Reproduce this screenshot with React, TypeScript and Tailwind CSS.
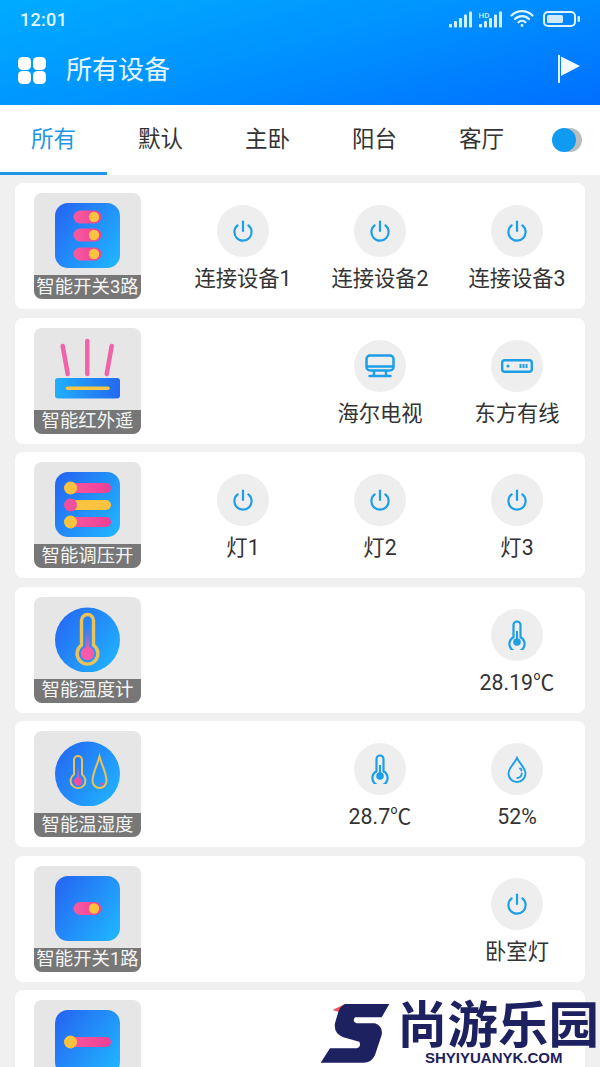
import React from "react";

const FONT = { fontFamily: 'Roboto, "Noto Sans CJK SC", sans-serif' };

function Defs({ id }: { id: string }) {
  return (
    <defs>
      <linearGradient id={`${id}-b`} x1="0" y1="0.1" x2="1" y2="0.8">
        <stop offset="0" stopColor="#2566f2" />
        <stop offset="1" stopColor="#20b2ff" />
      </linearGradient>
      <linearGradient id={`${id}-p`} x1="0" y1="0" x2="1" y2="0">
        <stop offset="0" stopColor="#f95aa0" />
        <stop offset="1" stopColor="#ee3f95" />
      </linearGradient>
      <linearGradient id={`${id}-t`} x1="0" y1="0" x2="0" y2="1">
        <stop offset="0" stopColor="#f04fa0" stopOpacity="0.1" />
        <stop offset="1" stopColor="#f95aa8" />
      </linearGradient>
    </defs>
  );
}

function Sw3() {
  return (
    <svg width="65" height="65" viewBox="0 0 65 65">
      <Defs id="sw3" />
      <rect width="65" height="65" rx="13" fill="url(#sw3-b)" />
      {[14, 32, 51].map((y) => (
        <g key={y}>
          <rect x="18.5" y={y - 6.5} width="28" height="13" rx="6.5" fill="url(#sw3-p)" />
          <circle cx="39" cy={y} r="5.2" fill="#f9c23f" />
        </g>
      ))}
    </svg>
  );
}

function Sw1() {
  return (
    <svg width="65" height="65" viewBox="0 0 65 65">
      <Defs id="sw1" />
      <rect width="65" height="65" rx="13" fill="url(#sw1-b)" />
      <rect x="18.5" y="26" width="28" height="13" rx="6.5" fill="url(#sw1-p)" />
      <circle cx="39" cy="32.5" r="5.2" fill="#f9c23f" />
    </svg>
  );
}

function Ir() {
  return (
    <svg width="65" height="65" viewBox="0 0 65 65">
      <Defs id="ir" />
      <g stroke="#f063a8" strokeWidth="4.5" strokeLinecap="round">
        <path d="M7.7 8 12.7 36" />
        <path d="M32.3 3V36" />
        <path d="M56.7 8 51.7 36" />
      </g>
      <linearGradient id="ir-ir" x1="0" y1="0" x2="1" y2="0">
        <stop offset="0" stopColor="#20b0fb" />
        <stop offset="1" stopColor="#2468f0" />
      </linearGradient>
      <rect x="0" y="40" width="65" height="20.5" rx="3" fill="url(#ir-ir)" />
      <path d="M12.5 50.2H53" stroke="#f7c744" strokeWidth="3.4" strokeLinecap="round" />
    </svg>
  );
}

function Slider3() {
  const rows = [
    { y: 16, bar: "url(#sl3-p)", knob: "#f9c23f" },
    { y: 33, bar: "#f9c23f", knob: "#f2509d" },
    { y: 50, bar: "url(#sl3-p)", knob: "#f9c23f" },
  ];
  return (
    <svg width="65" height="65" viewBox="0 0 65 65">
      <Defs id="sl3" />
      <rect width="65" height="65" rx="13" fill="url(#sl3-b)" />
      {rows.map((r) => (
        <g key={r.y}>
          <rect x="10" y={r.y - 5} width="46" height="10" rx="5" fill={r.bar} />
          <circle cx="15.5" cy={r.y} r="6.5" fill={r.knob} />
        </g>
      ))}
    </svg>
  );
}

function Slider1() {
  return (
    <svg width="65" height="65" viewBox="0 0 65 65">
      <Defs id="sl1" />
      <rect width="65" height="65" rx="13" fill="url(#sl1-b)" />
      <rect x="10" y="27" width="46" height="10" rx="5" fill="url(#sl1-p)" />
      <circle cx="15.5" cy="32" r="6.5" fill="#f9c23f" />
    </svg>
  );
}

function ThermoTile() {
  return (
    <svg width="65" height="65" viewBox="0 0 65 65">
      <Defs id="tt" />
      <circle cx="32.5" cy="33" r="32.5" fill="url(#tt-b)" />
      <path
        d="M26.5 38.2V13.5a6 6 0 0 1 12 0v24.7a10.4 10.4 0 1 1-12 0Z"
        fill="none"
        stroke="#ecc156"
        strokeWidth="3.4"
      />
      <rect x="30.5" y="22" width="4" height="22" fill="url(#tt-t)" />
      <circle cx="32.5" cy="46.5" r="6.8" fill="#f65aa8" />
    </svg>
  );
}

function HumTile() {
  return (
    <svg width="65" height="65" viewBox="0 0 65 65">
      <Defs id="ht" />
      <circle cx="32.5" cy="33" r="32.5" fill="url(#ht-b)" />
      <path
        d="M19 33.5V19a4 4 0 0 1 8 0v14.5a7.4 7.4 0 1 1-8 0Z"
        fill="none"
        stroke="#ecc156"
        strokeWidth="2"
      />
      <rect x="22" y="26" width="2" height="12" fill="url(#ht-t)" />
      <circle cx="23" cy="40.5" r="4.2" fill="#f04fa0" />
      <path
        d="M44.5 15.5C47 25 51.5 32 51.5 40a7 7 0 0 1-14 0C37.5 32 42 25 44.5 15.5Z"
        fill="none"
        stroke="#ecc156"
        strokeWidth="2"
      />
      <circle cx="47" cy="43" r="1.6" fill="#f04fa0" />
    </svg>
  );
}

const BLUE = "#1d9fe8";

function Power() {
  return (
    <svg width="24" height="24" viewBox="0 0 24 24" fill="none" stroke={BLUE} strokeWidth="2.2" strokeLinecap="round">
      <path d="M12 2.5V12" />
      <path d="M6.6 6.4a8.6 8.6 0 1 0 10.8 0" />
    </svg>
  );
}

function Tv() {
  return (
    <svg width="30" height="24" viewBox="0 0 30 24" fill="none" stroke={BLUE} strokeWidth="2.5">
      <rect x="1.5" y="1.5" width="27" height="15" rx="3.5" />
      <path d="M1.5 12.5H28.5" />
      <path d="M9 17V21.5M21 17V21.5M4.5 22H25.5" strokeLinecap="round" />
    </svg>
  );
}

function BoxIcon() {
  return (
    <svg width="32" height="14" viewBox="0 0 32 14" fill="none">
      <rect x="1.2" y="1.2" width="29.6" height="11.6" rx="2.5" stroke={BLUE} strokeWidth="2.4" />
      <circle cx="7" cy="7" r="1.6" fill={BLUE} />
      <path d="M19.5 5V9M22.5 5V9M25.5 5V9" stroke={BLUE} strokeWidth="2" />
    </svg>
  );
}

function Thermo() {
  return (
    <svg width="18" height="30" viewBox="0 0 18 30" fill="none">
      <path
        d="M5.5 17.2V5a3.5 3.5 0 0 1 7 0v12.2a7.6 7.6 0 1 1-7 0Z"
        stroke={BLUE}
        strokeWidth="2.2"
      />
      <path d="M9 11V20" stroke={BLUE} strokeWidth="2" />
      <circle cx="9" cy="22" r="3.8" fill={BLUE} />
    </svg>
  );
}

function Drop() {
  return (
    <svg width="20" height="27" viewBox="0 0 20 27" fill="none" stroke={BLUE} strokeWidth="1.9">
      <path d="M10 1.8C12 7 18.5 11.5 18.5 17.5a8.5 8.5 0 0 1-17 0C1.5 11.5 8 7 10 1.8Z" />
      <path d="M13 12.5a2 2 0 0 1 1.5 2M14.8 17.5a5 5 0 0 1-4.5 4.5" strokeLinecap="round" />
    </svg>
  );
}

type Item = { icon: React.ReactNode; label: string } | null;

function Cell({ item }: { item: Item }) {
  if (!item) return <div className="w-[137px]" />;
  return (
    <div className="flex w-[137px] flex-col items-center pt-[22px]">
      <div className="flex h-[52px] w-[52px] items-center justify-center rounded-full bg-[#eeeeee]">{item.icon}</div>
      <div className="mt-[7px] whitespace-nowrap pl-[1px] text-[21.3px] leading-[30px] text-[#333333]">{item.label}</div>
    </div>
  );
}

const power = <Power />;

const cards: { icon: React.ReactNode; name?: string; items: Item[] }[] = [
  {
    icon: <Sw3 />,
    name: "智能开关3路",
    items: [
      { icon: power, label: "连接设备1" },
      { icon: power, label: "连接设备2" },
      { icon: power, label: "连接设备3" },
    ],
  },
  {
    icon: <Ir />,
    name: "智能红外遥",
    items: [null, { icon: <Tv />, label: "海尔电视" }, { icon: <BoxIcon />, label: "东方有线" }],
  },
  {
    icon: <Slider3 />,
    name: "智能调压开",
    items: [
      { icon: power, label: "灯1" },
      { icon: power, label: "灯2" },
      { icon: power, label: "灯3" },
    ],
  },
  {
    icon: <ThermoTile />,
    name: "智能温度计",
    items: [null, null, { icon: <Thermo />, label: "28.19℃" }],
  },
  {
    icon: <HumTile />,
    name: "智能温湿度",
    items: [null, { icon: <Thermo />, label: "28.7℃" }, { icon: <Drop />, label: "52%" }],
  },
  {
    icon: <Sw1 />,
    name: "智能开关1路",
    items: [null, null, { icon: power, label: "卧室灯" }],
  },
  {
    icon: <Slider1 />,
    items: [null, null, null],
  },
];

function Signal({ hd }: { hd?: boolean }) {
  return (
    <svg width="23" height="17" viewBox="0 0 23 17" fill="#cfeeff">
      {hd && (
        <text x="-0.5" y="6.5" fontSize="8" fontWeight="500" fontFamily="Roboto, sans-serif" fill="#cfeeff">
          HD
        </text>
      )}
      <rect x="0" y="13" width="3" height="3.5" rx="0.8" />
      <rect x="5" y="10" width="3" height="6.5" rx="0.8" />
      <rect x="10" y="7" width="3" height="9.5" rx="0.8" />
      <rect x="15" y="3.5" width="3" height="13" rx="0.8" />
      <rect x="20" y="0.5" width="3" height="16" rx="0.8" />
    </svg>
  );
}

function Wifi() {
  return (
    <svg width="24" height="20" viewBox="0 0 24 20" fill="none" stroke="#dff4ff" strokeWidth="2.2" strokeLinecap="round">
      <path d="M1.5 6.5a15 15 0 0 1 21 0" />
      <path d="M5 10a10 10 0 0 1 14 0" />
      <path d="M8.5 13.3a5 5 0 0 1 7 0" />
      <circle cx="12" cy="16.5" r="1.4" fill="#dff4ff" stroke="none" />
    </svg>
  );
}

function Battery() {
  return (
    <svg width="37" height="16" viewBox="0 0 37 16">
      <rect x="1" y="1" width="31" height="14" rx="4" fill="none" stroke="#dff4ff" strokeWidth="2" />
      <rect x="4" y="4" width="16" height="8" rx="1.5" fill="#cfe9ff" />
      <rect x="34.5" y="5" width="2.5" height="6" rx="1" fill="#cfe9ff" />
    </svg>
  );
}

export default function App() {
  return (
    <div className="relative h-[1067px] w-[600px] overflow-hidden bg-[#f0f0f0]" style={FONT}>
      <header className="h-[105px] bg-[linear-gradient(165deg,#00acff_0%,#0095ff_45%,#006fff_100%)] text-white">
        <div className="flex h-[38px] items-center justify-between pl-[20px] pr-[20px]">
          <span className="text-[18px] font-medium tracking-[0.3px] text-[#e6f6ff]">12:01</span>
          <div className="flex items-center">
            <Signal />
            <span className="ml-[7px] flex"><Signal hd /></span>
            <span className="ml-[8px] flex"><Wifi /></span>
            <span className="ml-[9px] flex"><Battery /></span>
          </div>
        </div>
        <div className="flex h-[62px] items-center pl-[18px] pr-[19px] pt-[2px]">
          <div className="grid w-[28px] grid-cols-2 gap-[1px]">
            <span className="h-[13px] w-[13px] rounded-[4.5px] bg-white" />
            <span className="h-[13px] w-[13px] rounded-[4.5px] bg-white" />
            <span className="h-[13px] w-[13px] rounded-[4.5px] bg-white" />
            <span className="h-[13px] w-[13px] rounded-[4.5px] bg-white" />
          </div>
          <span className="ml-[20px] text-[26px] leading-none text-[#e8f6ff]">所有设备</span>
          <svg className="ml-auto -translate-y-[1px]" width="24" height="28" viewBox="0 0 24 28">
            <rect x="1" y="0" width="2" height="28" fill="#e0f2ff" />
            <path d="M4 1.5 23 11 4 21Z" fill="#f2faff" />
          </svg>
        </div>
      </header>

      <nav className="relative flex h-[70px] items-center bg-white text-[22.5px] text-[#333333]">
        <div className="flex h-full w-[107px] items-center justify-center border-b-[3px] border-[#2196e8] pt-[3px] text-[#2196e8]">所有</div>
        <div className="flex h-full w-[107px] items-center justify-center">默认</div>
        <div className="flex h-full w-[107px] items-center justify-center">主卧</div>
        <div className="flex h-full w-[107px] items-center justify-center">阳台</div>
        <div className="flex h-full w-[107px] items-center justify-center">客厅</div>
        <div className="relative ml-[17px] h-[24px] w-[30px]">
          <span className="absolute left-[6px] top-0 h-[24px] w-[24px] rounded-full bg-[#bdbdbd]" />
          <span className="absolute left-0 top-0 h-[24px] w-[24px] rounded-full bg-[#0f9bf2]" />
        </div>
      </nav>

      <main className="flex flex-col gap-[8.5px] px-[15px] pt-[8px]">
        {cards.map((c, i) => (
          <section key={i} className="flex h-[126px] shrink-0 rounded-[8px] bg-white">
            <div className="ml-[19px] mt-[10px] flex h-[106px] w-[107px] shrink-0 flex-col overflow-hidden rounded-[8px] bg-[#e6e6e6]">
              <div className="flex h-[82px] shrink-0 justify-center pt-[10px]">{c.icon}</div>
              {c.name && (
                <div className="flex h-[24px] items-center justify-center whitespace-nowrap bg-[#777777] text-[18.4px] leading-none text-[#f5f5f5]">
                  {c.name}
                </div>
              )}
            </div>
            <div className="ml-auto flex">
              {c.items.map((it, j) => (
                <Cell key={j} item={it} />
              ))}
            </div>
          </section>
        ))}
      </main>

      {/* watermark overlay */}
      <svg className="absolute left-[300px] top-[980px]" width="110" height="87" viewBox="0 0 330 261">
        <path d="M135 72 98 90 115 95Z" fill="#f0505a" />
        <path
          d="M135 72H268L245 112H165Q155 125 170 130H225Q250 140 245 165L225 225Q215 248 190 248H62L90 205H170Q185 200 178 185L130 172Q100 160 105 130L115 95Q120 80 135 72Z"
          fill="#1d2160"
        />
      </svg>
      <div
        className="absolute left-[397px] top-[996px] whitespace-nowrap text-[50.5px] font-bold leading-[50px] text-[#1d2160]"
        style={{ fontFamily: '"Noto Sans CJK SC", sans-serif' }}
      >
        尚游乐园
      </div>
      <div
        className="absolute left-[425px] top-[1049px] whitespace-nowrap text-[15px] font-bold leading-[18px] text-[#1d2160]"
        style={{ fontFamily: '"Liberation Sans", sans-serif' }}
      >
        SHYIYUANYK.COM
      </div>
    </div>
  );
}
